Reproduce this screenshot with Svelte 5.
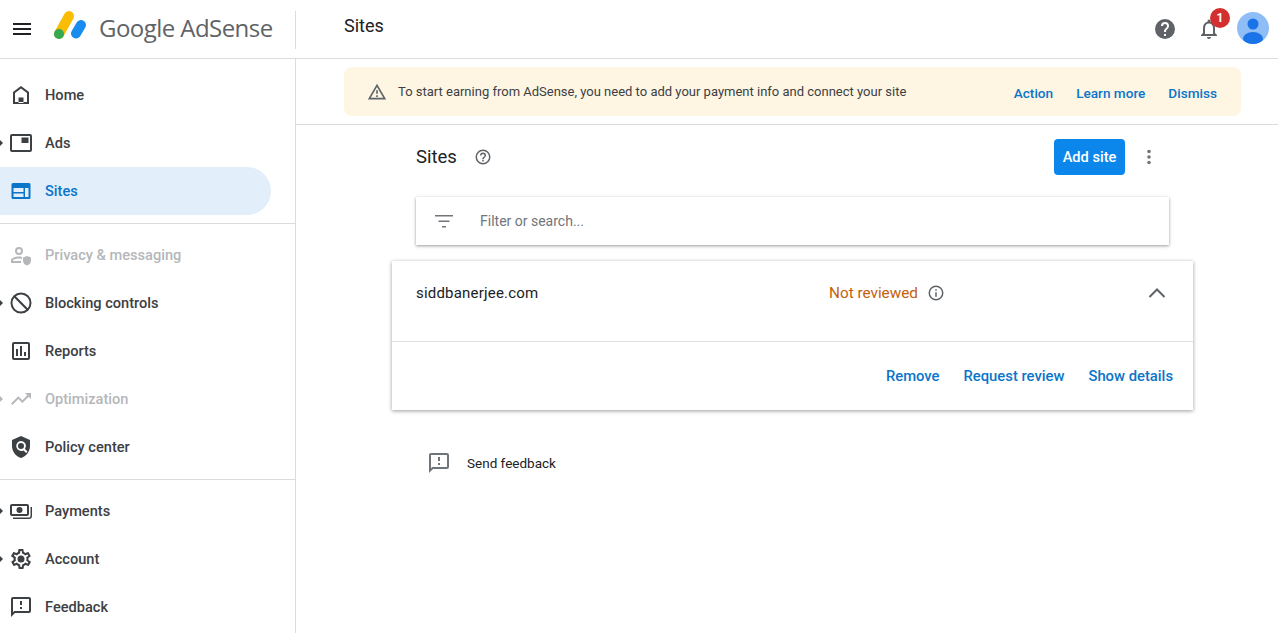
<script>
  const icons = {
    home: 'M12 3 4 9v12h16V9l-8-6zm6 16H6v-9l6-4.500 6 4.500v9zM9.500 14.500h5V20h-5z',
    ads: 'M3 3h18a2 2 0 0 1 2 2v14a2 2 0 0 1-2 2H3a2 2 0 0 1-2-2V5a2 2 0 0 1 2-2zm0 2v14h18V5H3zm9.500 1.500h7v5.500h-7z',
    sites: 'M4 4h16a1.500 1.500 0 0 1 1.500 1.500v13A1.500 1.500 0 0 1 20 20H4a1.500 1.500 0 0 1-1.500-1.500v-13A1.500 1.500 0 0 1 4 4zm.500 5v4h10V9h-10zm11.500 0v9h3.500V9H16zM4.500 14.500V18h10v-3.500h-10z',
    privacy: 'M10 4a4 4 0 1 1 0 8 4 4 0 0 1 0-8zm0 2a2 2 0 1 0 0 4 2 2 0 0 0 0-4zM2 20v-2.500C2 15 6.500 13.500 10 13.500c1 0 2 .1 3 .4v2c-1-.3-2-.4-3-.4-3 0-6 1.100-6 2V18h8v2H2zm16-7 4 1.500v3c0 2.500-1.700 4.200-4 5-2.300-.8-4-2.500-4-5v-3l4-1.500z',
    block: 'M12 1.500a10.500 10.500 0 1 0 0 21 10.500 10.500 0 0 0 0-21zM20.500 12a8.500 8.500 0 0 0-13.700-6.700L18.700 17.200A8.500 8.500 0 0 0 20.500 12zM12 20.500a8.500 8.500 0 0 0 5.200-1.800L5.300 6.800A8.500 8.500 0 0 0 12 20.500z',
    reports: 'M5 3h14a2 2 0 0 1 2 2v14a2 2 0 0 1-2 2H5a2 2 0 0 1-2-2V5a2 2 0 0 1 2-2zm0 2v14h14V5H5zm2 5h2v7H7v-7zm4-3h2v10h-2V7zm4 6h2v4h-2v-4z',
    trend: 'M16 6l2.300 2.300-4.900 4.900-4-4L2 16.600 3.400 18l6-6 4 4 6.300-6.300L22 12V6h-6z',
    policy: 'M12 1 3 5v6c0 5.500 3.800 10.700 9 12 5.200-1.300 9-6.500 9-12V5l-9-4zm0 5a5 5 0 0 1 4 8l2.500 2.500-1.400 1.400-2.500-2.500A5 5 0 1 1 12 6zm0 2a3 3 0 1 0 0 6 3 3 0 0 0 0-6z',
    payments: 'M3 5h15a2 2 0 0 1 2 2v8a2 2 0 0 1-2 2H3a2 2 0 0 1-2-2V7a2 2 0 0 1 2-2zm0 2v8h15V7H3zm7.500 1a3 3 0 1 1 0 6 3 3 0 0 1 0-6zM21.500 8h1.500v9a3 3 0 0 1-3 3H4v-1.500h16a1.500 1.500 0 0 0 1.500-1.500V8z',
    gear: 'M19.400 13c0-.3.1-.7.1-1s0-.7-.1-1l2.100-1.600c.2-.2.2-.4.1-.6l-2-3.500c-.1-.2-.4-.3-.6-.2l-2.500 1c-.5-.4-1.100-.7-1.700-1l-.4-2.700c0-.2-.2-.4-.5-.4h-4c-.2 0-.5.2-.5.400l-.4 2.700c-.6.3-1.200.6-1.700 1l-2.500-1c-.2-.1-.5 0-.6.200l-2 3.500c-.1.2-.1.4.100.6L4.600 11c0 .3-.1.700-.1 1s0 .7.1 1l-2.100 1.600c-.2.2-.2.4-.1.6l2 3.500c.1.2.4.3.6.2l2.500-1c.5.4 1.100.7 1.700 1l.4 2.700c0 .2.2.4.500.4h4c.2 0 .5-.2.500-.4l.4-2.700c.6-.3 1.200-.6 1.700-1l2.500 1c.2.1.5 0 .6-.2l2-3.500c.1-.2.1-.4-.1-.6L19.400 13zm-2-1.700c.1.300.1.500.1.700s0 .4-.1.700l-.1 1.100.9.700 1.100.8-.7 1.200-1.300-.5-1-.4-.9.700c-.4.300-.8.500-1.200.7l-1 .4-.2 1.100-.2 1.400h-1.400l-.2-1.400-.2-1.100-1-.4c-.4-.2-.8-.4-1.200-.7l-.9-.7-1 .4-1.300.5-.7-1.200 1.100-.8.900-.7-.1-1.100c-.1-.3-.1-.5-.1-.7s0-.4.1-.7l.1-1.100-.9-.7-1.100-.8.7-1.200 1.300.5 1 .4.900-.7c.4-.3.8-.5 1.200-.7l1-.4.2-1.100.2-1.400h1.400l.2 1.400.2 1.100 1 .4c.4.2.8.4 1.200.7l.9.7 1-.4 1.300-.5.7 1.200-1.100.8-.9.7.1 1.100zM12 8.500a3.500 3.500 0 1 0 0 7 3.500 3.500 0 0 0 0-7z',
    feedback: 'M20 2H4a2 2 0 0 0-2 2v18l4-4h14a2 2 0 0 0 2-2V4a2 2 0 0 0-2-2zm0 14H5.200L4 17.200V4h16v12zM11 12h2v2h-2v-2zm0-6h2v4h-2V6z',
    help: 'M12 2a10 10 0 1 0 0 20 10 10 0 0 0 0-20zm1 17h-2v-2h2v2zm2.100-7.700-.9.900c-.7.700-1.200 1.300-1.200 2.800h-2v-.5c0-1.100.5-2.100 1.200-2.800l1.200-1.300c.4-.3.600-.8.600-1.400a2 2 0 0 0-4 0H8a4 4 0 0 1 8 0c0 .9-.4 1.700-.9 2.300z',
    helpOutline: 'M11 18h2v-2h-2v2zm1-16a10 10 0 1 0 0 20 10 10 0 0 0 0-20zm0 18a8 8 0 1 1 0-16 8 8 0 0 1 0 16zm0-14a4 4 0 0 0-4 4h2a2 2 0 0 1 4 0c0 2-3 1.750-3 5h2c0-2.250 3-2.500 3-5a4 4 0 0 0-4-4z',
    info: 'M11 7h2v2h-2V7zm0 4h2v6h-2v-6zm1-9a10 10 0 1 0 0 20 10 10 0 0 0 0-20zm0 18a8 8 0 1 1 0-16 8 8 0 0 1 0 16z',
    warning: 'M12 5.990 19.530 19H4.470L12 5.990M12 2 1 21h22L12 2zm1 14h-2v2h2v-2zm0-6h-2v4h2v-4z'
  };

  const topNav = [
    { label: 'Home', icon: 'home' },
    { label: 'Ads', icon: 'ads', arrow: true },
    { label: 'Sites', icon: 'sites', active: true }
  ];
  const midNav = [
    { label: 'Privacy & messaging', icon: 'privacy', disabled: true },
    { label: 'Blocking controls', icon: 'block', arrow: true },
    { label: 'Reports', icon: 'reports' },
    { label: 'Optimization', icon: 'trend', arrow: true, disabled: true },
    { label: 'Policy center', icon: 'policy' }
  ];
  const bottomNav = [
    { label: 'Payments', icon: 'payments', arrow: true },
    { label: 'Account', icon: 'gear', arrow: true },
    { label: 'Feedback', icon: 'feedback' }
  ];
  const groups = [topNav, midNav, bottomNav];
</script>

<div class="page">
  <header class="topbar">
    <div class="brand">
      <button class="menu" aria-label="Main menu">
        <svg width="24" height="24" viewBox="0 0 24 24"><path d="M3 18h18v-2H3v2zm0-5h18v-2H3v2zm0-7v2h18V6H3z" fill="#202124" /></svg>
      </button>
      <svg class="logo" width="34" height="30" viewBox="0 0 34 30">
        <path d="M6 24 L16 6" stroke="#fbbc04" stroke-width="10" stroke-linecap="round" />
        <path d="M23 23.500 L28 15" stroke="#1a8cf0" stroke-width="10" stroke-linecap="round" />
        <circle cx="6" cy="24" r="5" fill="#34a853" />
      </svg>
      <span class="wordmark">Google AdSense</span>
    </div>
    <h1 class="page-title">Sites</h1>
    <div class="top-actions">
      <svg class="help" width="24" height="24" viewBox="0 0 24 24"><path d={icons.help} fill="#5f6368" /></svg>
      <div class="bell">
        <svg width="24" height="24" viewBox="0 0 24 24"><path d="M12 22c1.100 0 2-.9 2-2h-4c0 1.100.9 2 2 2zm6-6v-5c0-3.100-1.600-5.600-4.500-6.300V4a1.500 1.500 0 0 0-3 0v.7C7.600 5.400 6 7.900 6 11v5l-2 2v1h16v-1l-2-2zm-2 1H8v-6c0-2.500 1.500-4.500 4-4.500s4 2 4 4.500v6z" fill="#5f6368" /></svg>
        <span class="badge">1</span>
      </div>
      <svg class="avatar" width="32" height="32" viewBox="0 0 32 32">
        <defs><clipPath id="av"><circle cx="16" cy="16" r="16" /></clipPath></defs>
        <circle cx="16" cy="16" r="16" fill="#8fbdf6" />
        <g clip-path="url(#av)">
          <circle cx="16" cy="12" r="5.500" fill="#1a73e8" />
          <ellipse cx="16" cy="26.500" rx="10" ry="6.500" fill="#1a73e8" />
        </g>
      </svg>
    </div>
  </header>

  <div class="body">
    <nav class="sidebar">
      {#each groups as group}
        <ul class="nav-group">
          {#each group as item}
            <li class="nav-item" class:active={item.active} class:disabled={item.disabled}>
              {#if item.arrow}<span class="arrow"></span>{/if}
              <svg width="24" height="24" viewBox="0 0 24 24"><path d={icons[item.icon]} fill="currentColor" fill-rule="evenodd" /></svg>
              <span>{item.label}</span>
            </li>
          {/each}
        </ul>
      {/each}
    </nav>

    <main class="main">
      <div class="banner-strip">
        <div class="banner">
          <svg width="20" height="20" viewBox="0 0 24 24"><path d={icons.warning} fill="#5f6368" /></svg>
          <p>To start earning from AdSense, you need to add your payment info and connect your site</p>
          <div class="banner-links">
            <a href="#action">Action</a>
            <a href="#learn">Learn more</a>
            <a href="#dismiss">Dismiss</a>
          </div>
        </div>
      </div>

      <div class="content">
        <div class="section-head">
          <h2>Sites</h2>
          <svg width="18" height="18" viewBox="0 0 24 24"><path d={icons.helpOutline} fill="#5f6368" /></svg>
          <button class="add">Add site</button>
          <svg class="more" width="24" height="24" viewBox="0 0 24 24"><circle cx="12" cy="6.500" r="1.800" fill="#70757a" /><circle cx="12" cy="12" r="1.800" fill="#70757a" /><circle cx="12" cy="17.500" r="1.800" fill="#70757a" /></svg>
        </div>

        <div class="search">
          <svg width="24" height="24" viewBox="0 0 24 24"><path d="M3 6h18v1.400H3zM6.500 11.500h11v1.400h-11zM10 17h4v1.400h-4z" fill="#70757a" /></svg>
          <span>Filter or search...</span>
        </div>

        <section class="card">
          <div class="card-top">
            <span class="domain">siddbanerjee.com</span>
            <span class="status">Not reviewed</span>
            <svg class="info" width="18" height="18" viewBox="0 0 24 24"><path d={icons.info} fill="#5f6368" /></svg>
            <svg class="chevron" width="24" height="24" viewBox="0 0 24 24"><path d="M4.500 16 12 8.500l7.500 7.500" fill="none" stroke="#5f6368" stroke-width="2" /></svg>
          </div>
          <div class="card-actions">
            <a href="#remove">Remove</a>
            <a href="#review">Request review</a>
            <a href="#details">Show details</a>
          </div>
        </section>

        <div class="feedback">
          <svg width="24" height="24" viewBox="0 0 24 24"><path d={icons.feedback} fill="#70757a" /></svg>
          <span>Send feedback</span>
        </div>
      </div>
    </main>
  </div>
</div>

<style>
  :global(body) {
    background: #fff;
    font-family: Roboto, "Liberation Sans", sans-serif;
    color: #202124;
  }

  .page {
    height: 633px;
    overflow: hidden;
    display: flex;
    flex-direction: column;
  }

  .topbar {
    height: 58px;
    flex: none;
    display: flex;
    align-items: center;
    border-bottom: 1px solid #dadce0;
  }

  .brand {
    width: 295px;
    height: 38px;
    flex: none;
    display: flex;
    align-items: center;
    border-right: 1px solid #dadce0;
    box-sizing: content-box;
    margin-top: 1px;
  }

  .menu {
    width: 24px;
    height: 24px;
    margin: 0 0 2px 10px;
    padding: 0;
    border: none;
    background: none;
  }

  .logo {
    margin: 0 0 10px 19px;
    flex: none;
  }

  .wordmark {
    margin: 0 0 4px 12px;
    font-family: "Open Sans", sans-serif;
    font-size: 24px;
    letter-spacing: -0.55px;
    color: #5f6368;
    white-space: nowrap;
  }

  .page-title {
    margin: 0 0 7px 48px;
    font-size: 18px;
    font-weight: 400;
  }

  .top-actions {
    margin-left: auto;
    display: flex;
    align-items: center;
    padding: 0 9px 2px 0;
  }

  .help { margin-top: 1px; }

  .bell {
    position: relative;
    width: 24px;
    height: 24px;
    margin-left: 20px;
    margin-right: 16px;
    top: 1px;
  }

  .badge {
    position: absolute;
    top: -9px;
    left: 13px;
    width: 20px;
    height: 20px;
    border-radius: 50%;
    background: #d32f2f;
    color: #fff;
    font-size: 12px;
    font-weight: 700;
    line-height: 20px;
    text-align: center;
  }

  .body {
    flex: 1;
    display: flex;
    min-height: 0;
  }

  .sidebar {
    width: 295px;
    flex: none;
    border-right: 1px solid #dadce0;
  }

  .nav-group {
    list-style: none;
    margin: 0;
    padding: 8px 0;
    border-bottom: 1px solid #dadce0;
    padding-top: 12px;
  }

  .nav-group + .nav-group { padding-top: 7px; }
  .nav-group:last-child { border-bottom: none; }

  .nav-item {
    position: relative;
    height: 48px;
    width: 271px;
    box-sizing: border-box;
    display: flex;
    align-items: center;
    gap: 12px;
    padding-left: 9px;
    border-radius: 0 24px 24px 0;
    font-size: 14.600px;
    font-weight: 500;
    color: #3c4043;
  }

  .nav-item.active {
    background: #e3eefb;
    color: #0b75c9;
  }

  .nav-item.disabled { color: #b5b7ba; }

  .arrow {
    position: absolute;
    left: 0;
    top: 50%;
    margin-top: -3px;
    border-left: 3px solid currentColor;
    border-top: 3px solid transparent;
    border-bottom: 3px solid transparent;
  }

  .main {
    flex: 1;
    min-width: 0;
  }

  .banner-strip {
    padding: 8px 37px 8px 48px;
    border-bottom: 1px solid #dadce0;
  }

  .banner {
    height: 49px;
    display: flex;
    align-items: center;
    padding: 0 24px 0 23px;
    background: #fef6e3;
    border-radius: 8px;
    font-size: 13px;
    color: #3c4043;
  }

  .banner p {
    margin: 0 0 1px 11px;
  }

  .banner-links {
    margin-left: auto;
    display: flex;
    gap: 23px;
    padding-top: 3px;
  }

  a {
    color: #0b75c9;
    text-decoration: none;
    font-weight: 500;
    font-size: 13.600px;
  }

  .content {
    width: 801px;
    margin-left: 96px;
  }

  .section-head {
    height: 64px;
    margin-bottom: 8px;
    display: flex;
    align-items: center;
    padding: 0 32px 0 24px;
  }

  .section-head h2 {
    margin: 0 17px 0 0;
    font-size: 18.500px;
    font-weight: 400;
  }

  .add {
    margin-left: auto;
    width: 71px;
    height: 36px;
    border: none;
    border-radius: 4px;
    background: #0b87ec;
    color: #fff;
    font-family: inherit;
    font-size: 14.600px;
    font-weight: 500;
  }

  .more { margin-left: 12px; }

  .search {
    margin: 0 24px;
    height: 48px;
    display: flex;
    align-items: center;
    gap: 24px;
    padding-left: 16px;
    background: #fff;
    box-shadow: 0 1px 3px rgba(0, 0, 0, 0.4);
    font-size: 14px;
    color: #70757a;
  }

  .card {
    margin-top: 16px;
    height: 149px;
    box-shadow: 0 1px 4px rgba(0, 0, 0, 0.4);
    display: flex;
    flex-direction: column;
  }

  .card-top {
    height: 81px;
    flex: none;
    box-sizing: border-box;
    display: flex;
    align-items: flex-start;
    padding: 20px 24px 0;
    border-bottom: 1px solid #e0e0e0;
  }

  .domain {
    width: 413px;
    font-size: 15px;
    line-height: 24px;
    letter-spacing: 0.2px;
  }

  .status {
    font-size: 15.300px;
    line-height: 24px;
    color: #c5600a;
  }

  .info { margin: 3px 0 0 9px; }

  .chevron { margin-left: auto; }

  .card-actions {
    flex: 1;
    display: flex;
    align-items: center;
    justify-content: flex-end;
    gap: 24px;
    padding-right: 20px;
  }

  .card-actions a { font-size: 14.800px; }

  .feedback {
    margin: 41px 0 0 35px;
    display: flex;
    align-items: center;
    gap: 16px;
    font-size: 13.500px;
  }
</style>
